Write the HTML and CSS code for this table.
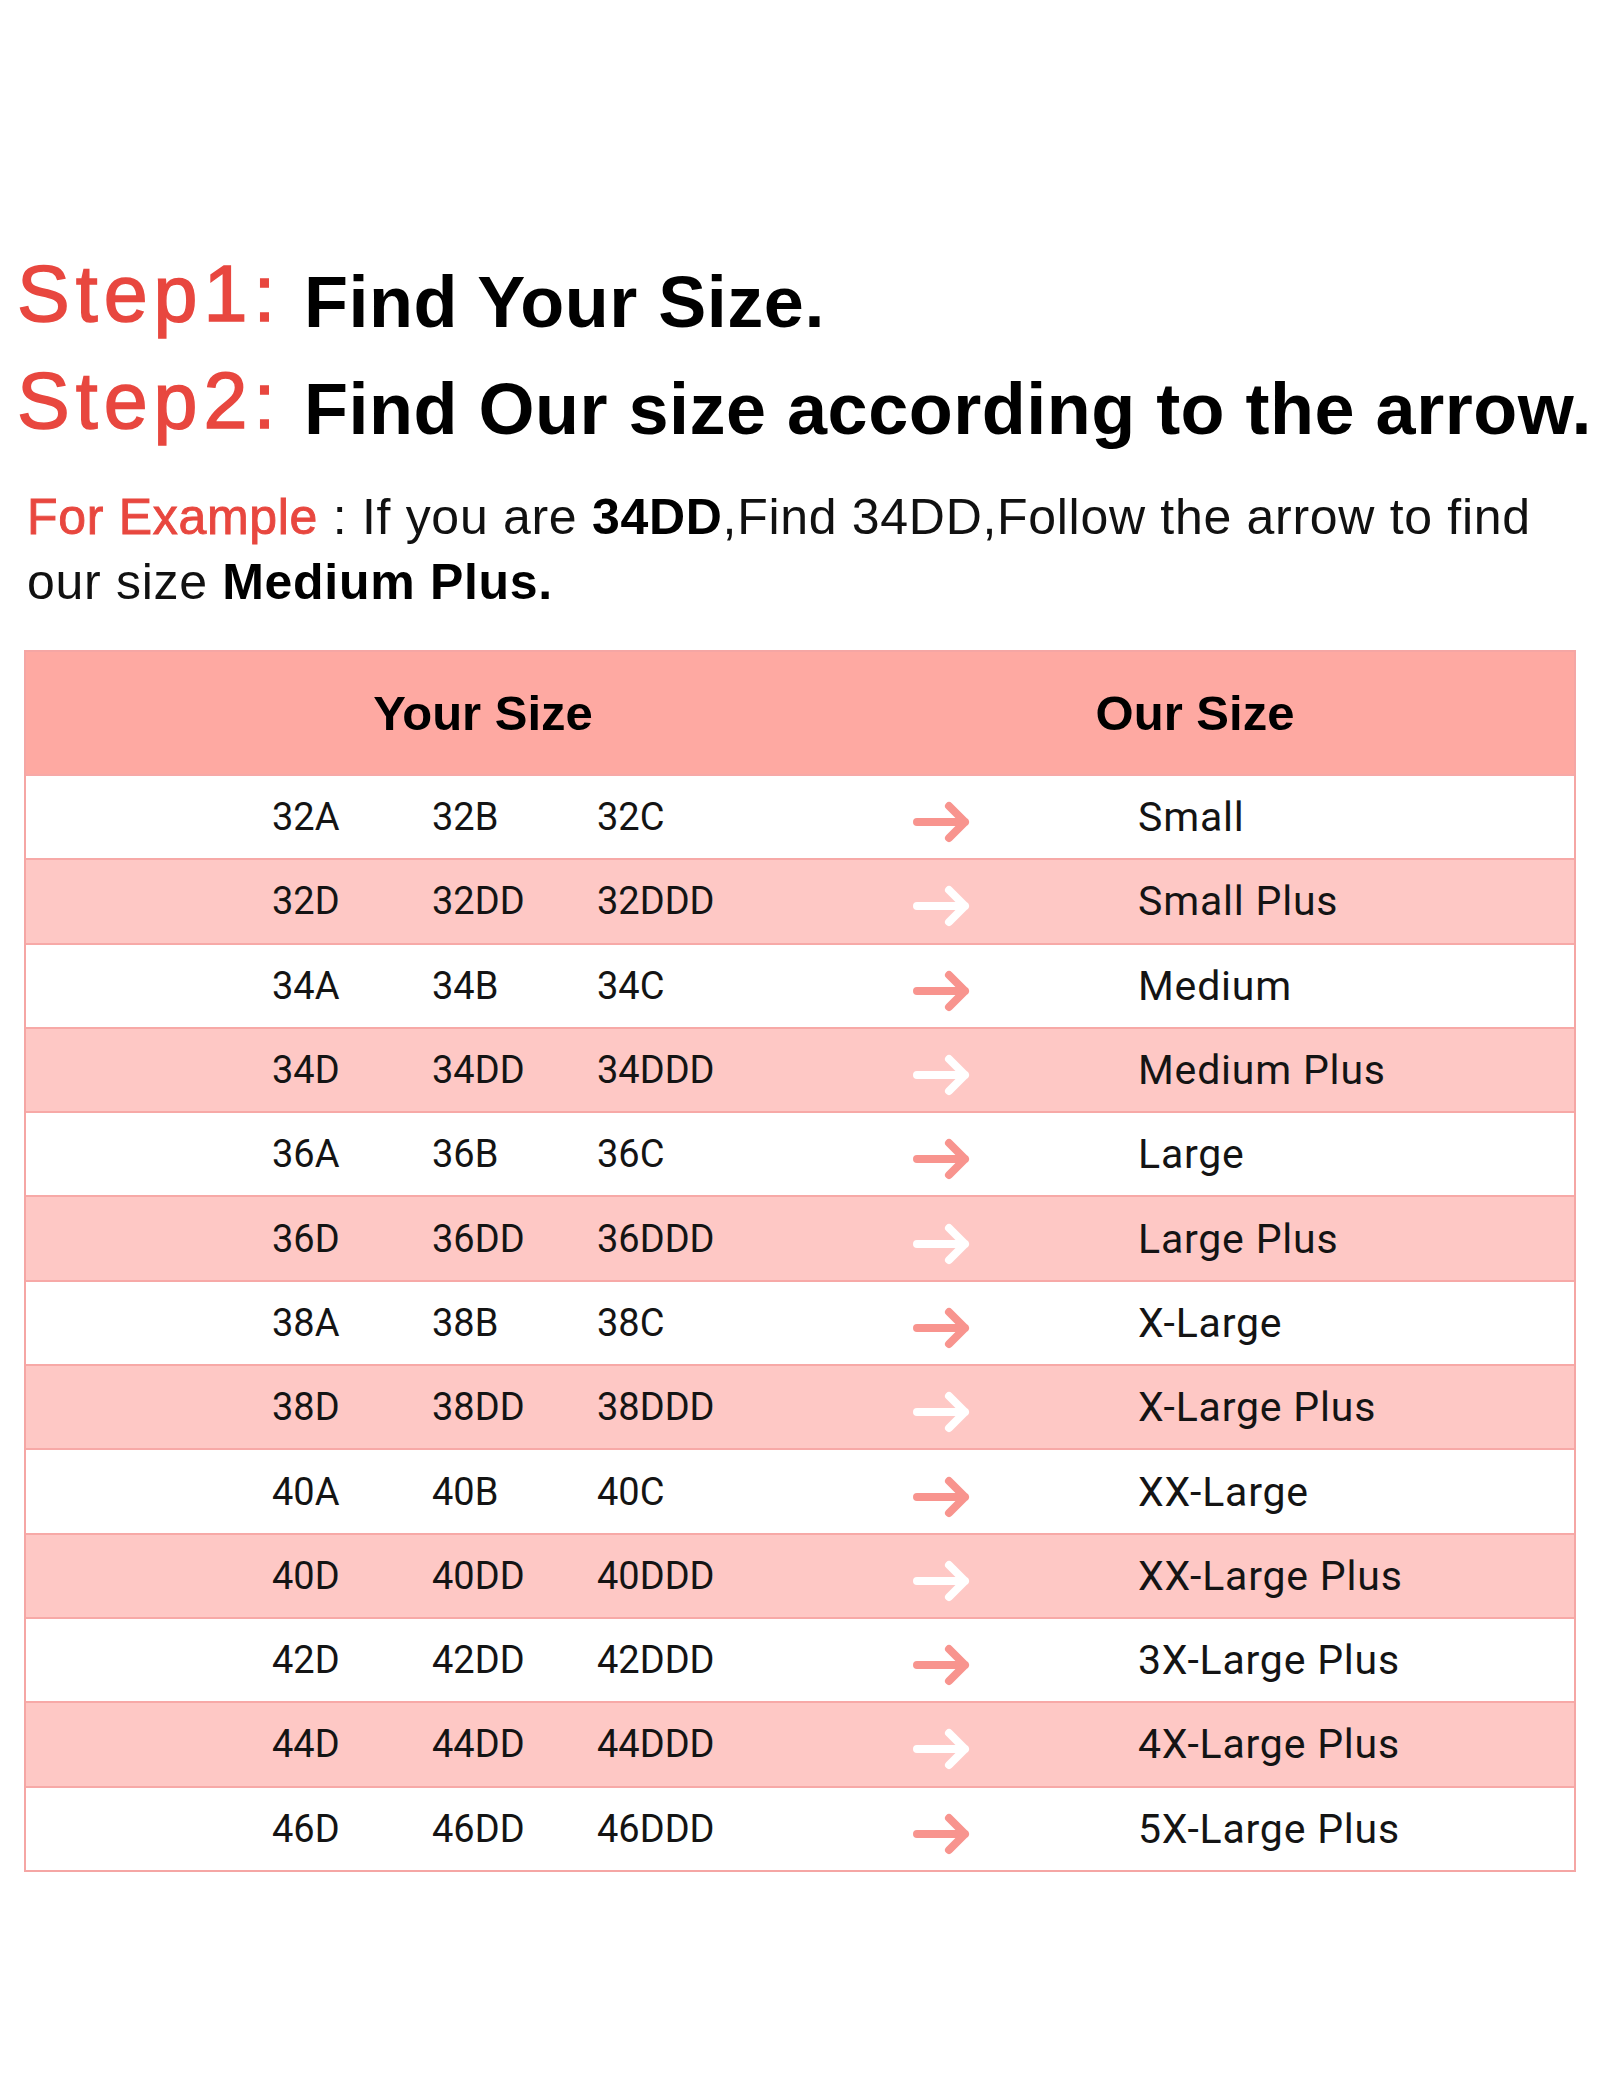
FILE: index.html
```html
<!DOCTYPE html>
<html lang="en">
<head>
<meta charset="utf-8">
<title>Size Chart</title>
<link rel="stylesheet" href="styles.css">
</head>
<body>
<div class="page">
  <div class="steps">
    <div class="step"><span class="step-label">Step1:</span><span class="step-text">Find Your Size.</span></div>
    <div class="step"><span class="step-label">Step2:</span><span class="step-text">Find Our size according to the arrow.</span></div>
  </div>
  <p class="example"><span class="ex-red">For Example</span> : If you are <b>34DD</b>,Find 34DD,Follow the arrow to find our size <b>Medium Plus.</b></p>

  <div class="size-table">
    <div class="thead">
      <div class="th">Your Size</div>
      <div class="th">Our Size</div>
    </div>

    <div class="row"><span class="c">32A</span><span class="c">32B</span><span class="c">32C</span><svg class="arrow" viewBox="0 0 60 52"><path d="M4 26H52M36 10L52 26L36 42"/></svg><span></span><span class="our">Small</span></div>
    <div class="row pink"><span class="c">32D</span><span class="c">32DD</span><span class="c">32DDD</span><svg class="arrow" viewBox="0 0 60 52"><path d="M4 26H52M36 10L52 26L36 42"/></svg><span></span><span class="our">Small Plus</span></div>
    <div class="row"><span class="c">34A</span><span class="c">34B</span><span class="c">34C</span><svg class="arrow" viewBox="0 0 60 52"><path d="M4 26H52M36 10L52 26L36 42"/></svg><span></span><span class="our">Medium</span></div>
    <div class="row pink"><span class="c">34D</span><span class="c">34DD</span><span class="c">34DDD</span><svg class="arrow" viewBox="0 0 60 52"><path d="M4 26H52M36 10L52 26L36 42"/></svg><span></span><span class="our">Medium Plus</span></div>
    <div class="row"><span class="c">36A</span><span class="c">36B</span><span class="c">36C</span><svg class="arrow" viewBox="0 0 60 52"><path d="M4 26H52M36 10L52 26L36 42"/></svg><span></span><span class="our">Large</span></div>
    <div class="row pink"><span class="c">36D</span><span class="c">36DD</span><span class="c">36DDD</span><svg class="arrow" viewBox="0 0 60 52"><path d="M4 26H52M36 10L52 26L36 42"/></svg><span></span><span class="our">Large Plus</span></div>
    <div class="row"><span class="c">38A</span><span class="c">38B</span><span class="c">38C</span><svg class="arrow" viewBox="0 0 60 52"><path d="M4 26H52M36 10L52 26L36 42"/></svg><span></span><span class="our">X-Large</span></div>
    <div class="row pink"><span class="c">38D</span><span class="c">38DD</span><span class="c">38DDD</span><svg class="arrow" viewBox="0 0 60 52"><path d="M4 26H52M36 10L52 26L36 42"/></svg><span></span><span class="our">X-Large Plus</span></div>
    <div class="row"><span class="c">40A</span><span class="c">40B</span><span class="c">40C</span><svg class="arrow" viewBox="0 0 60 52"><path d="M4 26H52M36 10L52 26L36 42"/></svg><span></span><span class="our">XX-Large</span></div>
    <div class="row pink"><span class="c">40D</span><span class="c">40DD</span><span class="c">40DDD</span><svg class="arrow" viewBox="0 0 60 52"><path d="M4 26H52M36 10L52 26L36 42"/></svg><span></span><span class="our">XX-Large Plus</span></div>
    <div class="row"><span class="c">42D</span><span class="c">42DD</span><span class="c">42DDD</span><svg class="arrow" viewBox="0 0 60 52"><path d="M4 26H52M36 10L52 26L36 42"/></svg><span></span><span class="our">3X-Large Plus</span></div>
    <div class="row pink"><span class="c">44D</span><span class="c">44DD</span><span class="c">44DDD</span><svg class="arrow" viewBox="0 0 60 52"><path d="M4 26H52M36 10L52 26L36 42"/></svg><span></span><span class="our">4X-Large Plus</span></div>
    <div class="row"><span class="c">46D</span><span class="c">46DD</span><span class="c">46DDD</span><svg class="arrow" viewBox="0 0 60 52"><path d="M4 26H52M36 10L52 26L36 42"/></svg><span></span><span class="our">5X-Large Plus</span></div>
  </div>
</div>
</body>
</html>
```

FILE: styles.css
```css
html, body {
  margin: 0;
  padding: 0;
  background: #ffffff;
}

.page {
  width: 1600px;
  min-height: 2100px;
  padding-top: 249px;
  box-sizing: border-box;
  font-family: "Liberation Sans", Arial, sans-serif;
  color: #000;
}

.steps {
  padding-left: 17px;
}

.step {
  font-size: 72px;
  line-height: 107px;
  font-weight: 700;
  letter-spacing: 0.5px;
  white-space: nowrap;
}

.step-label {
  display: inline-block;
  width: 287px;
  font-size: 79px;
  font-weight: 400;
  letter-spacing: 6px;
  color: #e8473f;
  -webkit-text-stroke: 1.5px #e8473f;
  line-height: 80px;
  vertical-align: 6px;
}

.example {
  margin: 22px 0 0 0;
  padding-left: 27px;
  width: 1548px;
  font-size: 50px;
  line-height: 65px;
  letter-spacing: 0.7px;
  color: #111;
}

.example b {
  font-weight: 700;
  color: #000;
}

.ex-red {
  color: #e8473f;
  -webkit-text-stroke: 0.9px #e8473f;
}

.size-table {
  margin: 35px 0 0 24px;
  width: 1552px;
  border: 2px solid #f5a6a4;
  box-sizing: border-box;
}

.thead {
  display: grid;
  grid-template-columns: 914px 510px 1fr;
  height: 122px;
  align-items: center;
  background: #fea9a2;
}

.th {
  text-align: center;
  font-size: 49px;
  font-weight: 700;
  color: #000;
}

.row {
  display: grid;
  grid-template-columns: 160px 165px 316px 60px 165px 1fr;
  align-items: center;
  height: 84.3px;
  box-sizing: border-box;
  padding-left: 246px;
  border-top: 2px solid #f7a9a7;
  background: #ffffff;
  font-family: Roboto, "Liberation Sans", sans-serif;
  color: #141414;
}

.row.pink {
  background: #fec8c5;
}

.c {
  font-size: 38px;
}

.our {
  font-size: 41px;
  letter-spacing: 0.8px;
}

.arrow {
  width: 60px;
  height: 52px;
  margin-top: 10px;
  fill: none;
  stroke: #f8948e;
  stroke-width: 8;
  stroke-linecap: round;
  stroke-linejoin: round;
}

.row.pink .arrow {
  stroke: #ffffff;
}
```
